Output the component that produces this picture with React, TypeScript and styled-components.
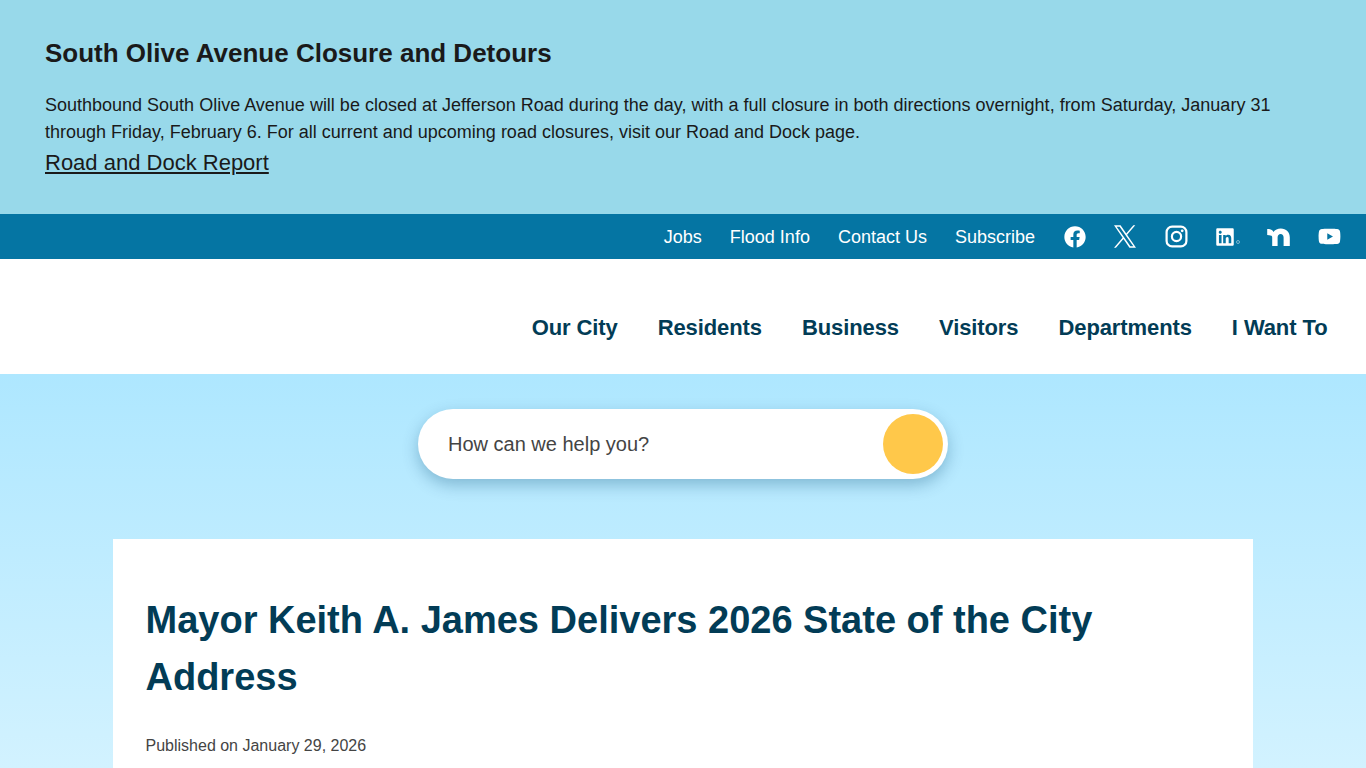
import React from 'react';
import styled, { createGlobalStyle } from 'styled-components';
import { FaFacebook, FaLinkedin, FaYoutube } from 'react-icons/fa';

const GlobalStyle = createGlobalStyle`
  html, body {
    margin: 0;
    padding: 0;
    height: 768px;
    overflow: hidden;
    font-family: "Liberation Sans", Arial, sans-serif;
  }
`;

const Page = styled.div`
  width: 1366px;
  height: 768px;
  overflow: hidden;
  display: flex;
  flex-direction: column;
`;

const Alert = styled.section`
  height: 214px;
  box-sizing: border-box;
  flex: none;
  background-color: #98d9ea;
  padding: 36px 45px 0;
  color: #1a1a1a;
`;

const AlertTitle = styled.h2`
  margin: 0 0 22px;
  font-size: 26px;
  line-height: 34px;
  font-weight: 700;
`;

const AlertText = styled.p`
  margin: 0;
  font-size: 18px;
  line-height: 27px;
  max-width: 1260px;
`;

const AlertLink = styled.a`
  display: block;
  font-size: 22px;
  line-height: 34px;
  color: #1a1a1a;
  text-decoration: underline;
`;

const TopBar = styled.div`
  height: 45px;
  flex: none;
  background-color: #0575a3;
  display: flex;
  align-items: center;
  justify-content: flex-end;
  padding-right: 12px;
`;

const TopLinks = styled.div`
  display: flex;
  gap: 28px;
  margin-right: 15px;
  padding-top: 2px;
`;

const TopLink = styled.a`
  color: #fff;
  font-size: 18px;
`;

const SocialIcon = styled.span<{ $width: number }>`
  width: ${(p) => p.$width}px;
  display: flex;
  justify-content: center;
  align-items: center;
  color: #fff;
`;

const MainNav = styled.nav`
  height: 115px;
  flex: none;
  background-color: #fff;
  display: flex;
  align-items: center;
  justify-content: flex-end;
  gap: 40px;
  padding: 23px 38.5px 0 0;
  box-sizing: border-box;
`;

const NavLink = styled.a`
  color: #023c56;
  font-size: 22px;
  font-weight: 700;
  letter-spacing: -0.1px;
`;

const Body = styled.main`
  flex: 1;
  background: linear-gradient(#aee7ff, #d2f2ff);
  display: flex;
  flex-direction: column;
  align-items: center;
  padding-top: 35px;
`;

const SearchBar = styled.div`
  width: 530px;
  height: 70px;
  flex: none;
  box-sizing: border-box;
  border-radius: 35px;
  background-color: #fff;
  box-shadow: 0 6px 16px rgba(0, 70, 110, 0.3);
  display: flex;
  align-items: center;
  justify-content: space-between;
  padding: 0 5px 0 30px;
`;

const SearchText = styled.span`
  font-size: 20px;
  color: #444;
`;

const SearchButton = styled.span`
  width: 60px;
  height: 60px;
  border-radius: 50%;
  background-color: #ffc84a;
`;

const Card = styled.article`
  width: 1140px;
  flex: 1;
  margin-top: 60px;
  box-sizing: border-box;
  background-color: #fff;
  padding: 53px 33px 0 32.5px;
`;

const Title = styled.h1`
  margin: 0 0 30px;
  font-size: 38px;
  line-height: 57px;
  font-weight: 700;
  color: #023c56;
`;

const Published = styled.div`
  font-size: 16px;
  line-height: 20px;
  color: #444;
`;

const XIcon = () => (
  <svg width="22" height="23" viewBox="0 0 1200 1227" fill="#fff">
    <path d="M714.163 519.284L1160.89 0H1055.03L667.137 450.887L357.328 0H0L468.492 681.821L0 1226.37H105.866L515.491 750.218L842.672 1226.37H1200L714.137 519.284H714.163ZM569.165 687.828L521.697 619.934L144.011 79.6944H306.615L611.412 515.685L658.88 583.579L1055.08 1150.3H892.476L569.165 687.854V687.828Z" />
  </svg>
);

const InstagramIcon = () => (
  <svg width="23" height="23" viewBox="0 0 23 23" fill="none" stroke="#fff" strokeWidth="2.2">
    <rect x="1.6" y="1.6" width="19.8" height="19.8" rx="5.5" />
    <circle cx="11.5" cy="11.5" r="4.6" />
    <circle cx="17.2" cy="5.8" r="1.4" fill="#fff" stroke="none" />
  </svg>
);

const RegisteredDot = styled.span`
  width: 4px;
  height: 4px;
  margin: 11px 0 0 1px;
  border-radius: 50%;
  border: 1px solid rgba(255, 255, 255, 0.45);
  box-sizing: border-box;
`;

const NextdoorIcon = () => (
  <svg width="23" height="18" viewBox="0 0 22.6 18" fill="#fff">
    <path d="M0 1c3.8 0 5.4 1.2 6.2 3C7.8 2 10.4.6 13.6.6c5.4 0 9 3.6 9 8.8V18h-6.2V9.6c0-2.2-1.2-3.6-3-3.6s-3 1.4-3 3.6V18H5V9.4C5 8 3.8 7.2 0 7z" />
  </svg>
);

const App: React.FC = () => {
  return (
    <Page>
      <GlobalStyle />
      <Alert>
        <AlertTitle>South Olive Avenue Closure and Detours</AlertTitle>
        <AlertText>
          Southbound South Olive Avenue will be closed at Jefferson Road during the day, with a full closure in both
          directions overnight, from Saturday, January 31 through Friday, February 6. For all current and upcoming road
          closures, visit our Road and Dock page.
        </AlertText>
        <AlertLink>Road and Dock Report</AlertLink>
      </Alert>
      <TopBar>
        <TopLinks>
          <TopLink>Jobs</TopLink>
          <TopLink>Flood Info</TopLink>
          <TopLink>Contact Us</TopLink>
          <TopLink>Subscribe</TopLink>
        </TopLinks>
        <SocialIcon $width={50}><FaFacebook size={22} /></SocialIcon>
        <SocialIcon $width={50}><XIcon /></SocialIcon>
        <SocialIcon $width={52}><InstagramIcon /></SocialIcon>
        <SocialIcon $width={50}><FaLinkedin size={20} /><RegisteredDot /></SocialIcon>
        <SocialIcon $width={52}><NextdoorIcon /></SocialIcon>
        <SocialIcon $width={50}><FaYoutube size={23} /></SocialIcon>
      </TopBar>
      <MainNav>
        <NavLink>Our City</NavLink>
        <NavLink>Residents</NavLink>
        <NavLink>Business</NavLink>
        <NavLink>Visitors</NavLink>
        <NavLink>Departments</NavLink>
        <NavLink>I Want To</NavLink>
      </MainNav>
      <Body>
        <SearchBar>
          <SearchText>How can we help you?</SearchText>
          <SearchButton />
        </SearchBar>
        <Card>
          <Title>Mayor Keith A. James Delivers 2026 State of the City Address</Title>
          <Published>Published on January 29, 2026</Published>
        </Card>
      </Body>
    </Page>
  );
};

export default App;
